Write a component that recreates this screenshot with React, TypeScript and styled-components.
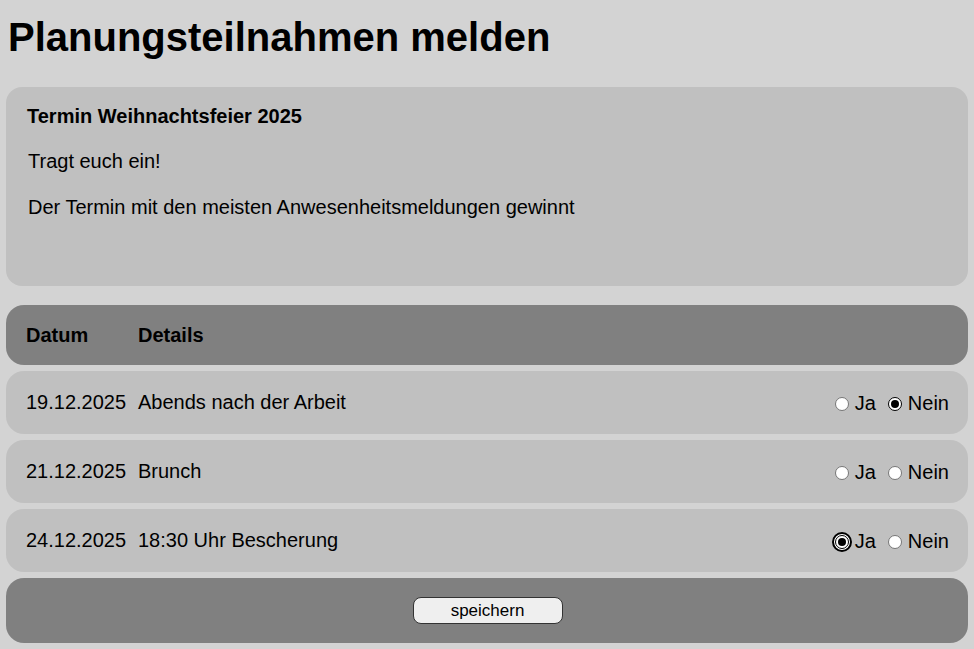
import React from "react";
import styled, { createGlobalStyle } from "styled-components";

const GlobalStyle = createGlobalStyle`
    html, body {
        margin: 0;
        padding: 0;
        background: #d3d3d3;
    }
    body {
        font-family: "Liberation Sans", Arial, sans-serif;
        color: #000;
    }
`;

type Choice = "ja" | "nein" | null;

type Termin = {
    datum: string;
    details: string;
    choice: Choice;
    focused?: "ja" | "nein";
};

const termine: Termin[] = [
    { datum: "19.12.2025", details: "Abends nach der Arbeit", choice: "nein" },
    { datum: "21.12.2025", details: "Brunch", choice: null },
    { datum: "24.12.2025", details: "18:30 Uhr Bescherung", choice: "ja", focused: "ja" },
];

const Page = styled.div`
    padding: 0 6px 6px 6px;
    display: flex;
    flex-direction: column;
`;

const Title = styled.h1`
    margin: 0;
    padding: 14px 0 0 2px;
    height: 87px;
    box-sizing: border-box;
    font-size: 40px;
    font-weight: bold;
    line-height: 46px;
`;

const InfoCard = styled.section`
    background: #c0c0c0;
    border-radius: 16px;
    height: 199px;
    box-sizing: border-box;
    padding: 17px 21px;
    margin-bottom: 19px;
`;

const InfoTitle = styled.div`
    font-size: 20px;
    font-weight: bold;
    line-height: 24px;
    margin-bottom: 22px;
`;

const InfoText = styled.p`
    margin: 0 0 23px 1px;
    font-size: 20px;
    line-height: 23px;
`;

const Table = styled.div`
    display: flex;
    flex-direction: column;
    gap: 6px;
`;

const Row = styled.div<{ $variant: "head" | "body" | "foot" }>`
    display: grid;
    grid-template-columns: 112px 1fr auto;
    align-items: center;
    padding: 0 19px 0 20px;
    border-radius: 18px;
    background: ${(p) => (p.$variant === "body" ? "#c0c0c0" : "#808080")};
    height: ${(p) => (p.$variant === "head" ? 60 : p.$variant === "foot" ? 65 : 63)}px;
    box-sizing: border-box;
    font-size: 20px;
    font-weight: ${(p) => (p.$variant === "head" ? "bold" : "normal")};
`;

const Footer = styled(Row)`
    display: flex;
    justify-content: center;
`;

const Choices = styled.div`
    display: flex;
    align-items: center;
    padding-top: 2px;
`;

const Option = styled.label`
    display: flex;
    align-items: center;
    margin-left: 12px;
`;

const Radio = styled.input<{ $focused?: boolean }>`
    appearance: none;
    width: 14px;
    height: 14px;
    margin: 0 6px 0 0;
    border-radius: 50%;
    background: #fff;
    border: 1px solid #767676;
    box-sizing: border-box;
    display: grid;
    place-items: center;
    ${(p) =>
        p.$focused
            ? `outline: 2px solid #000; outline-offset: 1px; box-shadow: 0 0 0 1px #fff;`
            : ""}

    &:checked {
        border: 1px solid #000;
    }
    &:checked::after {
        content: "";
        width: 8px;
        height: 8px;
        border-radius: 50%;
        background: #000;
    }
`;

const SaveButton = styled.button`
    width: 150px;
    height: 27px;
    font-family: "Liberation Sans", Arial, sans-serif;
    font-size: 17px;
    background: #efefef;
    border: 1px solid #333;
    border-radius: 8px;
    color: #000;
    padding: 0;
`;

export default function App() {
    return (
        <>
            <GlobalStyle />
            <Page>
                <Title>Planungsteilnahmen melden</Title>
                <InfoCard>
                    <InfoTitle>Termin Weihnachtsfeier 2025</InfoTitle>
                    <InfoText>Tragt euch ein!</InfoText>
                    <InfoText>Der Termin mit den meisten Anwesenheitsmeldungen gewinnt</InfoText>
                </InfoCard>
                <Table>
                    <Row $variant="head">
                        <span>Datum</span>
                        <span>Details</span>
                        <span />
                    </Row>
                    {termine.map((t, i) => (
                        <Row $variant="body" key={t.datum}>
                            <span>{t.datum}</span>
                            <span>{t.details}</span>
                            <Choices>
                                <Option>
                                    <Radio
                                        type="radio"
                                        name={`termin-${i}`}
                                        defaultChecked={t.choice === "ja"}
                                        $focused={t.focused === "ja"}
                                    />
                                    Ja
                                </Option>
                                <Option>
                                    <Radio
                                        type="radio"
                                        name={`termin-${i}`}
                                        defaultChecked={t.choice === "nein"}
                                        $focused={t.focused === "nein"}
                                    />
                                    Nein
                                </Option>
                            </Choices>
                        </Row>
                    ))}
                    <Footer $variant="foot">
                        <SaveButton type="button">speichern</SaveButton>
                    </Footer>
                </Table>
            </Page>
        </>
    );
}
